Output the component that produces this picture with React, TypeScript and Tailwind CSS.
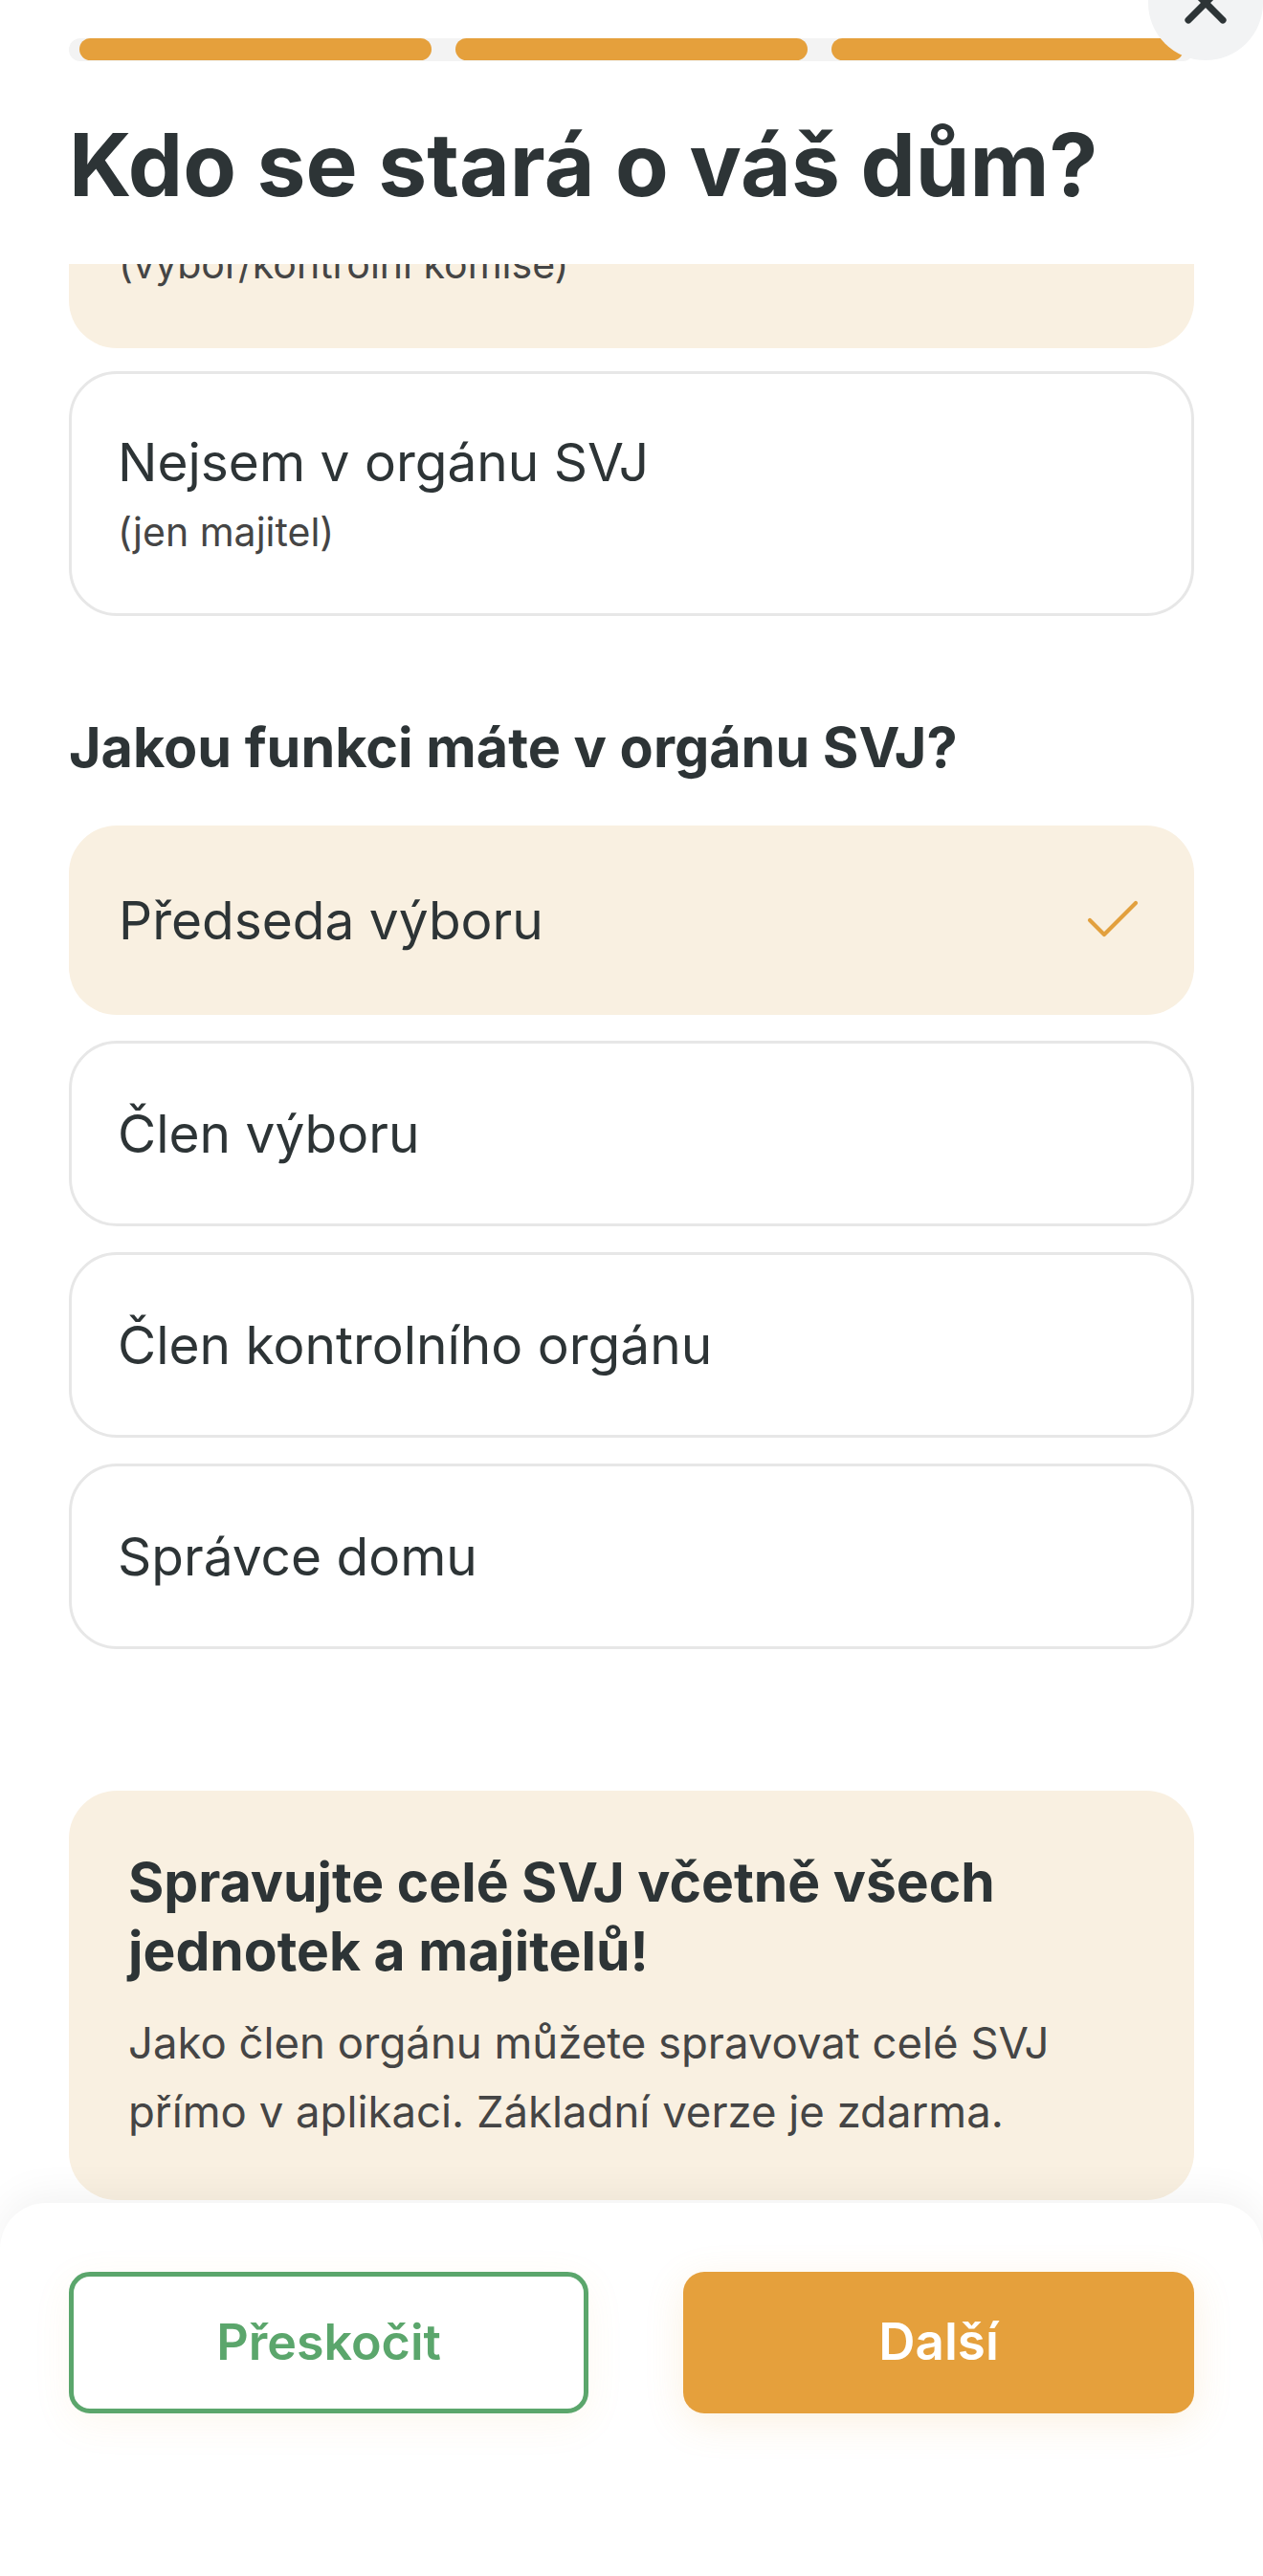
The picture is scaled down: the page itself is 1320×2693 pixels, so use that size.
import React, { useState } from "react";
import { Check, X } from "lucide-react";

const roles = ["Předseda výboru", "Člen výboru", "Člen kontrolního orgánu", "Správce domu"];

function OptionCard({
  label,
  note,
  active,
  tall,
  onClick,
}: {
  label: string;
  note?: string;
  active?: boolean;
  tall?: boolean;
  onClick?: () => void;
}) {
  const height = tall ? "h-[256px]" : active ? "h-[198px]" : "h-[194px]";
  return (
    <button
      onClick={onClick}
      className={`flex w-full shrink-0 items-center justify-between rounded-[50px] pr-[49px] text-left ${height} ${
        active ? "bg-[#f9f0e1] pl-[52px]" : "border-[3px] border-[#e7e7e7] bg-white pl-[48px]"
      }`}
    >
      <div className="flex flex-col">
        <span className="text-[55px] leading-[1.25] text-[#2d3436]">{label}</span>
        {note && <span className="mt-[12px] text-[41px] leading-[1.3] text-[#454545]">{note}</span>}
      </div>
      {active && <Check className="h-[72px] w-[72px] shrink-0 text-[#e2a03e]" strokeWidth={1.4} />}
    </button>
  );
}

export default function App() {
  const [role, setRole] = useState(0);

  return (
    <div className="relative flex h-[2693px] w-full flex-col overflow-hidden bg-white font-['Inter','Noto_Sans',sans-serif]">
      <button
        aria-label="Zavřít"
        className="absolute -top-[57px] right-0 z-20 grid h-[120px] w-[120px] place-items-center rounded-full bg-[#f2f3f4] text-[#2d3436]"
      >
        <X className="h-[72px] w-[72px]" strokeWidth={2.4} />
      </button>

      <header className="relative z-10 h-[276px] shrink-0 bg-white px-[72px] pt-[40px]">
        <div className="flex h-[24px] gap-[25px] rounded-full bg-[#f3f3f3] px-[11px]">
          <div className="h-[23px] flex-1 rounded-full bg-[#e5a03c]" />
          <div className="h-[23px] flex-1 rounded-full bg-[#e5a03c]" />
          <div className="h-[23px] flex-1 rounded-full bg-[#e5a03c]" />
        </div>
        <h1 className="mt-[54px] text-[91px] font-bold leading-[108px] text-[#2d3436]">
          Kdo se stará o váš dům?
        </h1>
      </header>

      <main className="flex-1 overflow-hidden px-[72px]">
        <div className="-mt-[168px] flex flex-col gap-[24px]">
          <OptionCard label="Jsem v orgánu SVJ" note="(výbor/kontrolní komise)" active tall />
          <OptionCard label="Nejsem v orgánu SVJ" note="(jen majitel)" tall />
        </div>

        <h2 className="mt-[103px] text-[57.5px] font-bold leading-[68px] text-[#2d3436]">
          Jakou funkci máte v orgánu SVJ?
        </h2>

        <div className="mt-[48px] flex flex-col gap-[27px]">
          {roles.map((r, i) => (
            <OptionCard key={r} label={r} active={role === i} onClick={() => setRole(i)} />
          ))}
        </div>

        <section className="mt-[148px] rounded-[50px] bg-[#f9f0e1] px-[62px] pb-[56px] pt-[60px]">
          <h3 className="text-[57px] font-bold leading-[72px] text-[#2d3436]">
            Spravujte celé SVJ včetně všech
            <br />
            jednotek a majitelů!
          </h3>
          <p className="mt-[24px] text-[45.5px] leading-[72px] text-[#454545]">
            Jako člen orgánu můžete spravovat celé SVJ
            <br />
            přímo v aplikaci. Základní verze je zdarma.
          </p>
        </section>
      </main>

      <footer className="relative z-10 h-[390px] shrink-0 rounded-t-[48px] bg-white px-[72px] pt-[72px] shadow-[0_-10px_40px_rgba(0,0,0,0.05)]">
        <div className="flex justify-between">
          <button className="h-[148px] w-[543px] rounded-[22px] border-[5px] border-[#5ba66c] bg-white text-[52px] font-semibold text-[#5ba66c] shadow-[0_10px_40px_rgba(229,160,60,0.08)]">
            Přeskočit
          </button>
          <button className="h-[148px] w-[534px] rounded-[22px] bg-[#e5a03c] text-[53px] font-semibold text-white shadow-[0_10px_40px_rgba(229,160,60,0.15)]">
            Další
          </button>
        </div>
      </footer>
    </div>
  );
}
